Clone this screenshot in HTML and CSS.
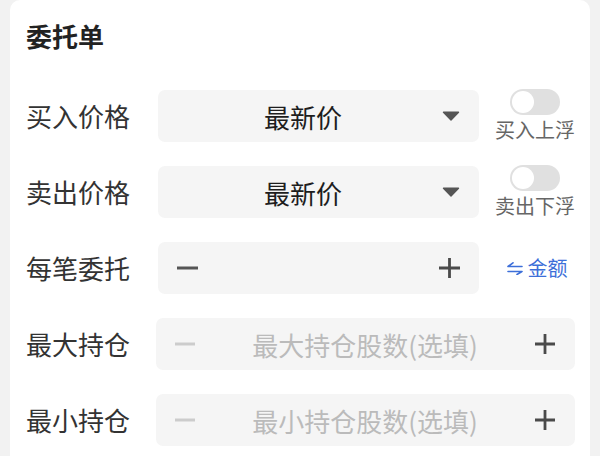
FILE: index.html
```html
<!DOCTYPE html>
<html lang="zh-CN">
<head>
<meta charset="utf-8">
<title>委托单</title>
<link rel="stylesheet" href="styles.css">
</head>
<body>
<div class="card">
  <div class="title">委托单</div>

  <div class="row">
    <div class="label">买入价格</div>
    <div class="box select">
      <span class="select-text">最新价</span>
      <svg class="caret" width="18" height="10" viewBox="0 0 18 10"><path d="M1.5 1.2 H16.5 L9 9 Z" fill="#555" stroke="#555" stroke-width="1.4" stroke-linejoin="round"/></svg>
    </div>
    <div class="side">
      <div class="switch"><span class="knob"></span></div>
      <div class="side-label">买入上浮</div>
    </div>
  </div>

  <div class="row">
    <div class="label">卖出价格</div>
    <div class="box select">
      <span class="select-text">最新价</span>
      <svg class="caret" width="18" height="10" viewBox="0 0 18 10"><path d="M1.5 1.2 H16.5 L9 9 Z" fill="#555" stroke="#555" stroke-width="1.4" stroke-linejoin="round"/></svg>
    </div>
    <div class="side">
      <div class="switch"><span class="knob"></span></div>
      <div class="side-label">卖出下浮</div>
    </div>
  </div>

  <div class="row">
    <div class="label">每笔委托</div>
    <div class="box stepper">
      <svg class="op" width="21" height="20" viewBox="0 0 21 20"><path d="M0 10 H21" stroke="#555" stroke-width="3"/></svg>
      <svg class="op" width="21" height="20" viewBox="0 0 21 20"><path d="M0 10 H21 M10.5 0 V20" stroke="#4a4a4a" stroke-width="2.8"/></svg>
    </div>
    <div class="side">
      <div class="switch-link">
        <svg width="16" height="13" viewBox="0 0 16 13"><path d="M1 4.5 H15 M1 4.5 L6 0.8 M15 9.5 H1 M15 9.5 L10 12.5" fill="none" stroke="#3d6fd9" stroke-width="1.6" stroke-linecap="round"/></svg>
        <span>金额</span>
      </div>
    </div>
  </div>

  <div class="row">
    <div class="label">最大持仓</div>
    <div class="box wide">
      <svg class="op" width="20" height="20" viewBox="0 0 20 20"><path d="M0 10 H20" stroke="#cccccc" stroke-width="3"/></svg>
      <span class="placeholder">最大持仓股数(选填)</span>
      <svg class="op" width="20" height="20" viewBox="0 0 20 20"><path d="M0 10 H20 M10 0 V20" stroke="#4a4a4a" stroke-width="2.8"/></svg>
    </div>
  </div>

  <div class="row">
    <div class="label">最小持仓</div>
    <div class="box wide">
      <svg class="op" width="20" height="20" viewBox="0 0 20 20"><path d="M0 10 H20" stroke="#cccccc" stroke-width="3"/></svg>
      <span class="placeholder">最小持仓股数(选填)</span>
      <svg class="op" width="20" height="20" viewBox="0 0 20 20"><path d="M0 10 H20 M10 0 V20" stroke="#4a4a4a" stroke-width="2.8"/></svg>
    </div>
  </div>
</div>
</body>
</html>
```

FILE: styles.css
```css
html, body {
  margin: 0;
  padding: 0;
}
body {
  background: #f2f2f2;
  font-family: "Noto Sans CJK SC", "Noto Sans", sans-serif;
  color: #333;
}
.card {
  margin: 0 10px;
  background: #fff;
  border-radius: 10px 10px 0 0;
  padding: 18px 15px 0 16px;
  min-height: 100vh;
  box-sizing: border-box;
}
.title {
  font-size: 26px;
  line-height: 36px;
  font-weight: 700;
  color: #222;
  margin-bottom: 36px;
}
.row {
  display: flex;
  align-items: center;
  height: 52px;
  margin-bottom: 24px;
}
.label {
  width: 130px;
  flex: 0 0 130px;
  font-size: 26px;
  line-height: 36px;
  color: #333;
}
.box {
  height: 52px;
  background: #f5f5f5;
  border-radius: 7px;
  display: flex;
  align-items: center;
  box-sizing: border-box;
}
.select, .stepper {
  flex: 0 0 321px;
  margin-left: 2px;
}
.select {
  padding-right: 19px;
}
.select-text {
  flex: 1;
  text-align: center;
  padding-left: 6px;
  font-size: 26px;
  font-weight: 400;
  color: #1e1e1e;
}
.caret {
  display: block;
}
.stepper {
  justify-content: space-between;
  padding: 0 19px;
}
.op {
  display: block;
  flex: none;
}
.wide {
  flex: 1;
  padding: 0 20px 0 19px;
}
.placeholder {
  flex: 1;
  text-align: center;
  font-size: 26px;
  color: #bbbbbb;
}
.side {
  flex: 0 0 80px;
  margin-left: 16px;
  display: flex;
  flex-direction: column;
  align-items: center;
}
.switch {
  width: 50px;
  height: 26px;
  border-radius: 13px;
  background: #e0e0e0;
  display: flex;
  align-items: center;
  padding: 0 2px;
  box-sizing: border-box;
  margin-top: -1px;
}
.knob {
  width: 22px;
  height: 22px;
  border-radius: 50%;
  background: #fff;
}
.side-label {
  margin-top: 3px;
  font-size: 20px;
  line-height: 24px;
  color: #666;
}
.switch-link {
  display: flex;
  align-items: center;
  gap: 5px;
  color: #3d6fd9;
  font-size: 20px;
  line-height: 24px;
  margin-left: 4px;
}
.switch-link svg {
  display: block;
}
```
